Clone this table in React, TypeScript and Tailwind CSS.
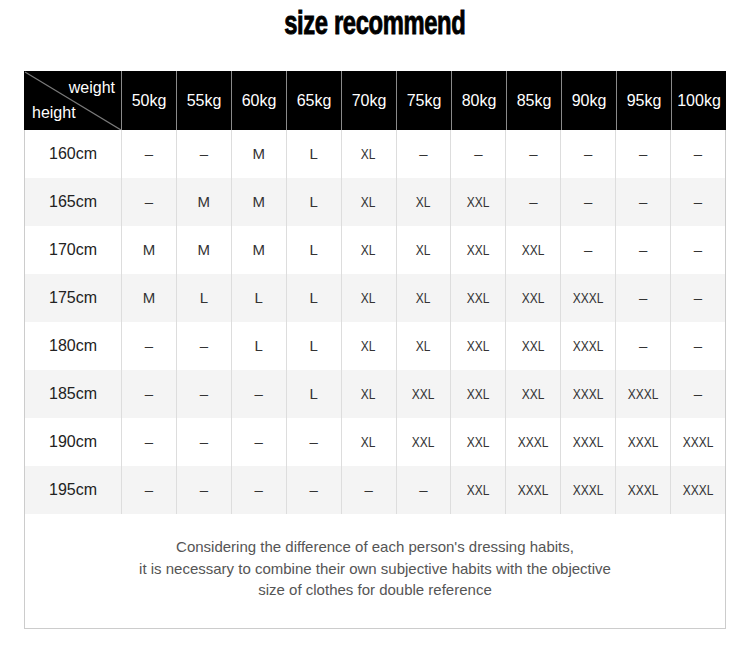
const weights = ["50kg", "55kg", "60kg", "65kg", "70kg", "75kg", "80kg", "85kg", "90kg", "95kg", "100kg"];

const rows: [string, string[]][] = [
  ["160cm", ["–", "–", "M", "L", "XL", "–", "–", "–", "–", "–", "–"]],
  ["165cm", ["–", "M", "M", "L", "XL", "XL", "XXL", "–", "–", "–", "–"]],
  ["170cm", ["M", "M", "M", "L", "XL", "XL", "XXL", "XXL", "–", "–", "–"]],
  ["175cm", ["M", "L", "L", "L", "XL", "XL", "XXL", "XXL", "XXXL", "–", "–"]],
  ["180cm", ["–", "–", "L", "L", "XL", "XL", "XXL", "XXL", "XXXL", "–", "–"]],
  ["185cm", ["–", "–", "–", "L", "XL", "XXL", "XXL", "XXL", "XXXL", "XXXL", "–"]],
  ["190cm", ["–", "–", "–", "–", "XL", "XXL", "XXL", "XXXL", "XXXL", "XXXL", "XXXL"]],
  ["195cm", ["–", "–", "–", "–", "–", "–", "XXL", "XXXL", "XXXL", "XXXL", "XXXL"]],
];

const SizeCell = ({ value }: { value: string }) => (
  <div className="flex items-center justify-center border-l border-[#dddddd] text-[15px] text-[#333]">
    {value.includes("X") ? (
      <span className="inline-block scale-x-[0.8]">{value}</span>
    ) : (
      <span className={value === "–" ? "pt-[1px]" : ""}>{value}</span>
    )}
  </div>
);

export default function App() {
  return (
    <div className="w-[750px] h-[654px] bg-white font-['Liberation_Sans',Arial,sans-serif]">
      <div className="h-[71px] flex justify-center pt-[6px]">
        <h1 className="text-[33px] leading-[33px] font-bold text-black scale-x-[0.72] tracking-[-0.5px] [-webkit-text-stroke:0.9px_black]">
          size recommend
        </h1>
      </div>

      <div className="w-[702px] mx-auto">
        <div className="grid grid-cols-[97px_repeat(11,55px)] h-[59px] bg-black text-white text-[16px]">
          <div className="relative flex flex-col justify-between py-2 px-2 leading-[18px]">
            <svg className="absolute inset-0 w-full h-full" viewBox="0 0 97 59" preserveAspectRatio="none">
              <line x1="1" y1="1" x2="97" y2="59" stroke="#7a7a7a" strokeWidth="1.2" />
            </svg>
            <span className="relative self-end -mr-[2px]">weight</span>
            <span className="relative self-start">height</span>
          </div>
          {weights.map((w) => (
            <div key={w} className="flex items-center justify-center border-l border-[#8a8a8a]">
              {w}
            </div>
          ))}
        </div>

        <div className="border-x border-b border-[#cccccc]">
          {rows.map(([h, sizes], i) => (
            <div
              key={h}
              className={`grid grid-cols-[96px_repeat(11,minmax(0,1fr))] h-[48px] ${i % 2 === 1 ? "bg-[#f4f4f4]" : "bg-white"}`}
            >
              <div className="flex items-center justify-center text-[16px] text-[#222]">{h}</div>
              {sizes.map((s, j) => (
                <SizeCell key={j} value={s} />
              ))}
            </div>
          ))}
          <div className="h-[114px] pt-[22px] text-center text-[15px] leading-[21.5px] text-[#555]">
            <p>Considering the difference of each person's dressing habits,</p>
            <p>it is necessary to combine their own subjective habits with the objective</p>
            <p>size of clothes for double reference</p>
          </div>
        </div>
      </div>
    </div>
  );
}
